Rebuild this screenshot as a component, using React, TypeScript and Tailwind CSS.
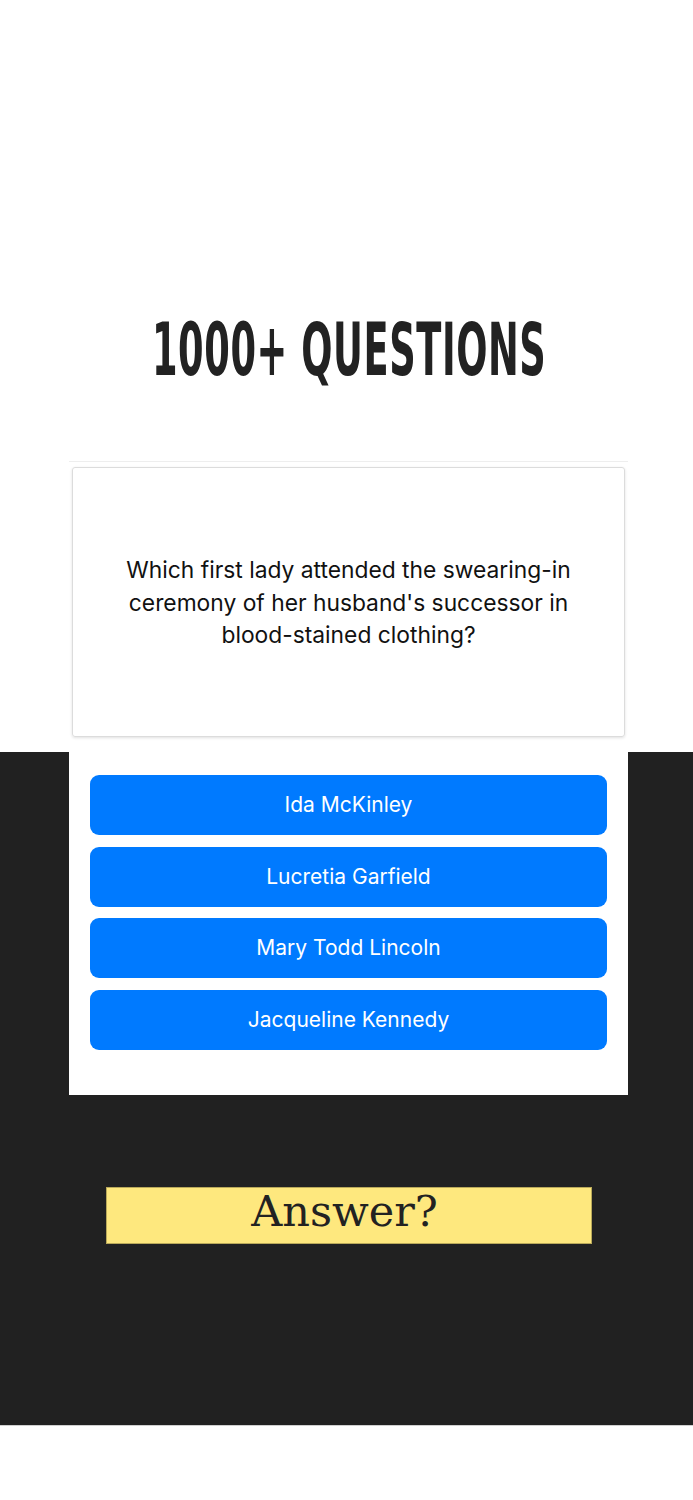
export default function App() {
  const answers = ["Ida McKinley", "Lucretia Garfield", "Mary Todd Lincoln", "Jacqueline Kennedy"];
  return (
    <div className="w-full bg-white" style={{ fontFamily: "Inter, 'Noto Sans', sans-serif" }}>
      <div className="relative h-[752px]">
        <div className="pt-[318px] flex justify-center pl-[6px]">
          <h1
            className="text-[73px] leading-[64px] font-bold text-[#222] tracking-[1px] scale-x-[0.56] whitespace-nowrap"
            style={{ fontFamily: "'DejaVu Sans Condensed', 'DejaVu Sans', sans-serif" }}
          >
            1000+ QUESTIONS
          </h1>
        </div>
        <div className="relative z-10 ml-[69px] w-[559px] mt-[79px] bg-white border-t border-[#eeeeee] pt-[5px] pb-[45px]">
          <div className="mx-[3px] h-[270px] border border-[#dcdcdc] rounded-[3px] shadow-[0_1px_3px_rgba(0,0,0,0.12)] flex items-center justify-center px-[30px]">
            <p className="text-center text-[22.8px] leading-[32.5px] text-[#111] pt-[2px]">
              Which first lady attended the swearing-in ceremony of her husband's successor in blood-stained clothing?
            </p>
          </div>
          <div className="mt-[38px] px-[21px] flex flex-col gap-[11.5px]">
            {answers.map((a) => (
              <button
                key={a}
                className="h-[60px] w-full rounded-[9px] bg-[#007aff] text-white text-[21px] flex items-center justify-center"
              >
                {a}
              </button>
            ))}
          </div>
        </div>
      </div>
      <div className="bg-[#212121] h-[674px] pt-[435px] border-b border-[#cfcfcf]">
        <div
          className="ml-[106px] w-[486px] h-[57px] bg-[#fee87e] border border-[#b9a95a] flex items-center justify-center text-[43px] leading-none text-[#222] pb-[8px] pr-[9px]"
          style={{ fontFamily: "'DejaVu Serif', serif" }}
        >
          Answer?
        </div>
      </div>
      <div className="h-[74px] bg-white" />
    </div>
  );
}
